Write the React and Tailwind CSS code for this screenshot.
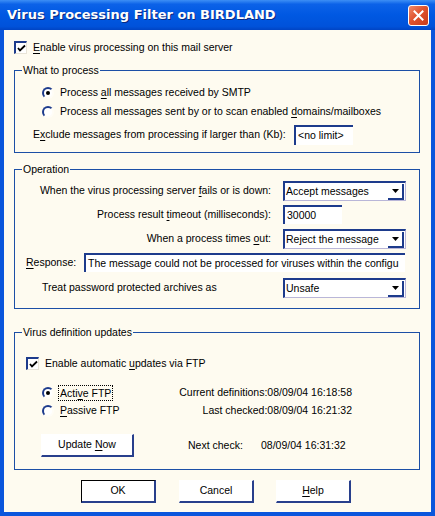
import React from "react";

const font = { fontFamily: '"Liberation Sans", Arial, sans-serif' };

function U({ children }) {
  return <span className="underline underline-offset-[2px]">{children}</span>;
}

function Check() {
  return (
    <div className="w-[13px] h-[13px] shrink-0 bg-white border-t-[2px] border-l-[2px] border-t-[#1d3b8c] border-l-[#1d3b8c] border-r border-b border-r-[#e8e4d8] border-b-[#e8e4d8] flex items-center justify-center">
      <svg width="9" height="9" viewBox="0 0 9 9">
        <path d="M1 4 L3 6.5 L8 1.5" stroke="#000" strokeWidth="1.8" fill="none" />
      </svg>
    </div>
  );
}

function Radio({ on }) {
  return (
    <div className="w-[12px] h-[12px] shrink-0 rounded-full bg-white border-[2px] border-t-[#1d3b8c] border-l-[#1d3b8c] border-r-[#fffdf6] border-b-[#fffdf6] flex items-center justify-center">
      {on && <div className="w-[4px] h-[4px] rounded-full bg-black" />}
    </div>
  );
}

function Combo({ text, w = "w-[123px]" }) {
  return (
    <div className={`${w} h-[20px] shrink-0 bg-white border-t-[2px] border-l-[2px] border-t-[#1d3b8c] border-l-[#1d3b8c] border-r border-b border-r-[#b9b6d8] border-b-[#b9b6d8] flex items-center`}>
      <span className="flex-1 pl-[1px] text-[10.5px] text-black whitespace-nowrap overflow-hidden">{text}</span>
      <div className="w-[16px] h-[16px] mr-[1px] bg-white border-r-[2px] border-b-[2px] border-r-[#1d3b8c] border-b-[#1d3b8c] flex items-center justify-center">
        <svg width="7" height="4" viewBox="0 0 7 4">
          <path d="M0 0 H7 L3.5 4 Z" fill="#000" />
        </svg>
      </div>
    </div>
  );
}

function Edit({ text, w, h = "h-[19px]" }) {
  return (
    <div className={`${w} ${h} shrink-0 bg-white border-t-[2px] border-l-[2px] border-t-[#1d3b8c] border-l-[#1d3b8c] flex items-center overflow-hidden`}>
      <span className="pl-[2px] text-[10.5px] text-black whitespace-nowrap">{text}</span>
    </div>
  );
}

function Btn({ children, w, def }) {
  return (
    <div
      className={`${w} h-[23px] shrink-0 bg-white flex items-center justify-center text-[10.5px] text-black border-r-[2px] border-b-[2px] border-r-[#283f8c] border-b-[#283f8c] ${
        def ? "border-t border-l border-t-black border-l-black" : "border-t border-l border-t-white border-l-white"
      }`}
    >
      <span className="whitespace-nowrap">{children}</span>
    </div>
  );
}

function Group({ title, mt, h, children }) {
  return (
    <div className={`relative ${mt} ${h} ml-[10px] mr-[11px] border border-[#1c4fa6] flex flex-col`}>
      <span className="absolute -top-[8px] left-[7px] px-[1px] bg-[#fefbf0] text-[10.5px] leading-[14px] text-black whitespace-nowrap">
        {title}
      </span>
      {children}
    </div>
  );
}

export default function App() {
  return (
    <div
      className="w-[435px] h-[516px] bg-[#0a56dc] flex flex-col overflow-hidden"
      style={font}
    >
      <div className="h-[30px] shrink-0 bg-[linear-gradient(to_bottom,#3d8ff5_0%,#0c62e8_14%,#0058e2_50%,#0052da_88%,#0044c4_100%)] flex items-center pl-[7px] pr-[6px]">
        <span
          className="flex-1 text-white font-bold text-[13px] [text-shadow:1px_1px_0_#0a2a80] whitespace-nowrap"
          style={{ fontFamily: '"DejaVu Sans", "Liberation Sans", sans-serif' }}
        >
          Virus Processing Filter on BIRDLAND
        </span>
        <div className="w-[21px] h-[21px] rounded-[3px] border border-white bg-[linear-gradient(135deg,#f08a6a_0%,#e0532f_45%,#c73a1a_100%)] flex items-center justify-center">
          <svg width="11" height="11" viewBox="0 0 11 11">
            <path d="M1.5 1.5 L9.5 9.5 M9.5 1.5 L1.5 9.5" stroke="#fff" strokeWidth="2" strokeLinecap="square" />
          </svg>
        </div>
      </div>

      <div className="flex-1 mx-[4px] mb-[4px] bg-[#fefbf0] flex flex-col text-[10.5px] text-black">
        <div className="mt-[11px] ml-[10px] h-[13px] flex items-center gap-[6px]">
          <Check />
          <span><U>E</U>nable virus processing on this mail server</span>
        </div>

        <Group title="What to process" mt="mt-[16px]" h="h-[83px]">
          <div className="mt-[14px] pl-[27px] h-[16px] flex items-center gap-[6px]">
            <Radio on />
            <span>Process <U>a</U>ll messages received by SMTP</span>
          </div>
          <div className="mt-[3px] pl-[27px] h-[16px] flex items-center gap-[6px]">
            <Radio />
            <span>Process all messages sent by or to scan enabled <U>d</U>omains/mailboxes</span>
          </div>
          <div className="mt-[5px] h-[20px] flex items-center">
            <span className="w-[279px] pl-[18px] whitespace-nowrap">E<U>x</U>clude messages from processing if larger than (Kb):</span>
            <Edit text="<no limit>" w="w-[59px]" h="h-[20px]" />
          </div>
        </Group>

        <Group title="Operation" mt="mt-[16px]" h="h-[140px]">
          <div className="mt-[11px] h-[20px] flex items-center">
            <span className="w-[256px] text-right whitespace-nowrap">When the virus processing server <U>f</U>ails or is down:</span>
            <span className="w-[12px]" />
            <Combo text="Accept messages" />
          </div>
          <div className="mt-[4px] h-[19px] flex items-center">
            <span className="w-[256px] text-right whitespace-nowrap">Process result <U>t</U>imeout (milliseconds):</span>
            <span className="w-[12px]" />
            <Edit text="30000" w="w-[59px]" />
          </div>
          <div className="mt-[5px] h-[20px] flex items-center">
            <span className="w-[256px] text-right whitespace-nowrap">When a process times <U>o</U>ut:</span>
            <span className="w-[12px]" />
            <Combo text="Reject the message" />
          </div>
          <div className="mt-[4px] h-[19px] flex items-center">
            <span className="w-[69px] pl-[11px] whitespace-nowrap"><U>R</U>esponse:</span>
            <Edit text="The message could not be processed for viruses within the configu" w="w-[321px]" />
          </div>
          <div className="mt-[6px] h-[20px] flex items-center">
            <span className="w-[268px] pl-[27px] whitespace-nowrap">Treat password protected archives as</span>
            <Combo text="Unsafe" />
          </div>
        </Group>

        <Group title="Virus definition updates" mt="mt-[23px]" h="h-[138px]">
          <div className="mt-[24px] pl-[11px] h-[13px] flex items-center gap-[6px]">
            <Check />
            <span>Enable automatic <U>u</U>pdates via FTP</span>
          </div>
          <div className="mt-[15px] h-[16px] flex items-center">
            <div className="w-[140px] pl-[27px] flex items-center gap-[5px]">
              <Radio on />
              <span className="outline outline-1 outline-dotted outline-black px-[1px] leading-[14px]">Acti<U>v</U>e FTP</span>
            </div>
            <span className="w-[197px] text-right whitespace-nowrap">Current definitions:08/09/04 16:18:58</span>
          </div>
          <div className="mt-[2px] h-[16px] flex items-center">
            <div className="w-[140px] pl-[27px] flex items-center gap-[6px]">
              <Radio />
              <span><U>P</U>assive FTP</span>
            </div>
            <span className="w-[197px] text-right whitespace-nowrap">Last checked:08/09/04 16:21:32</span>
          </div>
          <div className="mt-[15px] h-[23px] flex items-center">
            <div className="w-[173px] pl-[26px]">
              <Btn w="w-[93px]">Update <U>N</U>ow</Btn>
            </div>
            <span className="w-[73px] whitespace-nowrap">Next check:</span>
            <span className="whitespace-nowrap">08/09/04 16:31:32</span>
          </div>
        </Group>

        <div className="mt-[10px] pl-[77px] flex items-center">
          <Btn w="w-[75px]" def>OK</Btn>
          <span className="w-[23px]" />
          <Btn w="w-[75px]">Cancel</Btn>
          <span className="w-[22px]" />
          <Btn w="w-[75px]"><U>H</U>elp</Btn>
        </div>
      </div>
    </div>
  );
}
